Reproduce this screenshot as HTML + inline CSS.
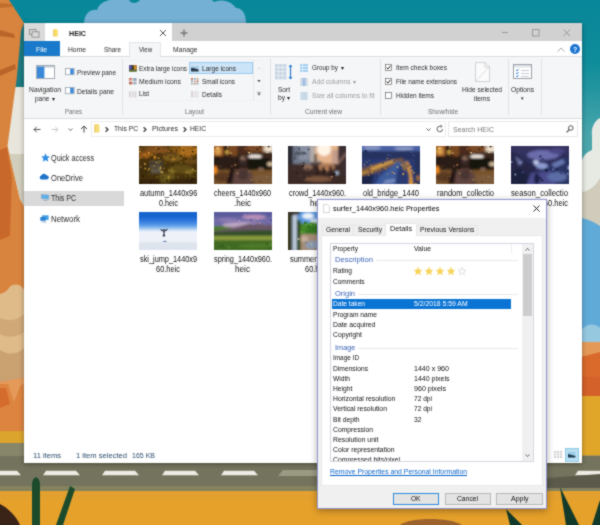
<!DOCTYPE html>
<html lang="en"><head><meta charset="utf-8"><title>HEIC - File Explorer</title>
<style>
html,body{margin:0;padding:0}
body{width:600px;height:525px;overflow:hidden;position:relative;background:#0a8796;font-family:"Liberation Sans",sans-serif}
.b{position:absolute;box-sizing:border-box}
.t{position:absolute;white-space:nowrap;line-height:10px;height:10px;color:#2b2b2b;transform-origin:0 50%;font-family:"Liberation Sans",sans-serif}
svg{position:absolute;display:block;overflow:visible}
#root{position:absolute;left:0;top:0;width:600px;height:525px;overflow:hidden;filter:url(#soft)}
</style></head><body>
<svg width="0" height="0" style="left:0;top:0"><defs><filter id="soft" x="0" y="0" width="100%" height="100%" color-interpolation-filters="sRGB"><feConvolveMatrix order="3" kernelMatrix="1 2 1 2 12 2 1 2 1" divisor="24" edgeMode="duplicate" preserveAlpha="true"/></filter></defs></svg>
<div id="root">
<svg width="600" height="525" viewBox="0 0 600 525" style="left:0;top:0">
<defs>
<linearGradient id="sky" x1="0" y1="0" x2="0" y2="1"><stop offset="0" stop-color="#08879a"/><stop offset="0.12" stop-color="#0f8c9a"/><stop offset="0.26" stop-color="#4aa6ab"/></linearGradient>
</defs>
<rect x="0" y="0" width="600" height="525" fill="url(#sky)"/>
<path d="M84 24 C84 14 90 9 97 10 C99 4 104 1 110 0 L129 0 C131 4 137 4 140 0 L212 0 C213 2 215 2 217 1 C224 -1 232 2 236 8 C242 8 246 13 246 24 Z" fill="#73b0d4"/>
<path d="M0 0 L9 0 L24 23 L24 140 L19 140 L17 60 L24 28 L24 470 L0 470 Z" fill="#d9843e"/>
<rect x="0" y="0" width="24" height="470" fill="#d9843e"/>
<path d="M9 0 L30 0 L30 30 L24 23 Z" fill="#08879a"/>
<path d="M24 23 L21 31 L18 65 L16.5 80 L15.5 88 L24 88 Z" fill="#1d7b82"/>
<path d="M15.5 87 L24 87 L24 206 L20 199 L7.5 146 Z" fill="#e8e6dc"/>
<path d="M9.4 154 L24 154 L24 206 L20 199 Z" fill="#d2cebd"/>
<path d="M0 3 L12 4 L13 7 L0 8 Z" fill="#c26f2e"/>
<path d="M0 30 L14 34 L15 38 L0 36 Z" fill="#b9652a"/>
<path d="M0 70 L15 64 L16 69 L0 76 Z" fill="#b9652a"/>
<path d="M0 150 L7 147 L12 178 L10 236 L0 240 Z" fill="#c8692b"/>
<path d="M0 294 C4 293 7 291 9 288 C11 284 18 283 22 287 L24 290 L24 382 L0 382 Z" fill="#dfbb8a"/>
<path d="M0 318 C10 322 18 320 24 314 L24 332 C16 338 6 338 0 334 Z" fill="#d0a878"/>
<path d="M0 350 C10 356 18 354 24 348 L24 382 L0 382 Z" fill="#caa272"/>
<path d="M0 382 L24 378 L24 436 L0 436 Z" fill="#dc8440"/>
<path d="M0 384 L8 384 L14 402 L20 386 L24 384 L24 378 L0 382 Z" fill="#e59a5a"/>
<path d="M0 388 L6 388 L10 404 L0 408 Z" fill="#d46c2e"/>
<rect x="0" y="431" width="24" height="14" fill="#dba42c"/>
<path d="M600 118 C594 121 591 128 592 136 L592 150 C586 152 581 158 581 166 L581 232 L600 232 Z" fill="#e7e9e3"/>
<path d="M581 192 C588 192 596 186 600 178 L600 232 L581 232 Z" fill="#d0cbba"/>
<path d="M581 218 C588 219 594 222 600 226 L600 345 L581 345 Z" fill="#60aad8"/>
<path d="M581 330 C588 322 596 324 600 328 L600 348 L581 348 Z" fill="#96c8e0"/>
<rect x="581" y="342" width="19" height="16" fill="#e39a58"/>
<path d="M581 357 L600 352 L600 400 L581 400 Z" fill="#d96a2c"/>
<path d="M581 378 C588 374 594 380 600 376 L600 400 L581 400 Z" fill="#d4602a"/>
<rect x="581" y="396" width="19" height="60" fill="#e0a62a"/>
<rect x="0" y="443" width="600" height="49" fill="#74735d"/>
<rect x="0" y="443" width="600" height="13" fill="#87866a"/>
<rect x="0" y="486" width="600" height="6" fill="#85835f"/>
<rect x="581" y="440" width="19" height="15.5" fill="#e0a62a"/>
<path d="M-13 470.8 L17 470.8 L21 475.2 L-16 475.2 Z" fill="#ecebe4"/>
<path d="M46 470.8 L76 470.8 L80 475.2 L43 475.2 Z" fill="#ecebe4"/>
<path d="M105 470.8 L135 470.8 L139 475.2 L102 475.2 Z" fill="#ecebe4"/>
<path d="M165 470.8 L195 470.8 L199 475.2 L162 475.2 Z" fill="#ecebe4"/>
<path d="M224 470.8 L254 470.8 L258 475.2 L221 475.2 Z" fill="#ecebe4"/>
<path d="M578 470.8 L608 470.8 L612 475.2 L575 475.2 Z" fill="#ecebe4"/>
<path d="M283 470 L317 470 L317 476 L278 476 Z" fill="#9a9982"/>
<path d="M548 478 L600 474 L600 488 L540 488 Z" fill="#5c5b4b"/>
<rect x="0" y="491" width="600" height="34" fill="#e2a02e"/>
<rect x="0" y="500" width="600" height="25" fill="#e6a12a"/>
<path d="M32 525 L32 485 C32 475 40 475 40 485 L40 525 Z" fill="#1c4b2c"/>
<path d="M56 525 L70 486 L75 489 L63 525 Z" fill="#1c4b2c"/>
<path d="M0 504 C8 508 16 516 20 525 L0 525 Z" fill="#3a2418"/>
<path d="M560 487 L579 525 L566 525 Z" fill="#123a2a"/>
<path d="M506 509 L522 525 L510 525 Z" fill="#123a2a"/>
<path d="M600 500 L592 525 L600 525 Z" fill="#123a2a"/>
<path d="M400 525 C410 517 450 517 462 525 Z" fill="#9c622c"/>
</svg>
<div class="b" style="left:24px;top:23px;width:557.7px;height:439.7px;background:#ffffff;box-shadow:0 1px 5px rgba(0,0,0,.35);"></div>
<div class="b" style="left:24px;top:23px;width:557.7px;height:18px;background:#d1d1d1;"></div>
<div class="b" style="left:24px;top:23px;width:21px;height:18px;background:#dadada;"></div>
<svg style="left:28.5px;top:28.5px" width="11" height="9" viewBox="0 0 11 9"><rect x="0.5" y="0.5" width="6.5" height="5" fill="none" stroke="#8c8c8c" stroke-width=".9"/><rect x="3" y="2.8" width="7" height="5.4" fill="#dadada" stroke="#8c8c8c" stroke-width=".9"/></svg>
<div class="b" style="left:45px;top:23px;width:127px;height:18px;background:#ffffff;"></div>
<svg style="left:53.3px;top:29.3px" width="5" height="7.4" viewBox="0 0 5 7.4"><path d="M1 0 H3.4 L4.8 1.2 V7.4 H1 Z" fill="#f9dc6c"/><path d="M0.2 0.8 H1.4 V7.4 H0.2 Z" fill="#efc44a"/></svg>
<span class="t" style="left:69.0px;top:28.5px;font-size:7.5px;color:#222;font-weight:bold;transform:scaleX(0.949);">HEIC</span>
<svg style="left:158.7px;top:28.5px" width="8" height="8" viewBox="0 0 8 8"><path d="M1 1 L7 7 M7 1 L1 7" stroke="#555" stroke-width="1" fill="none"/></svg>
<svg style="left:179.5px;top:28.5px" width="8" height="8" viewBox="0 0 8 8"><path d="M4 0.5 V7.5 M0.5 4 H7.5" stroke="#555" stroke-width="1" fill="none"/></svg>
<svg style="left:502px;top:32px" width="7" height="2" viewBox="0 0 7 2"><path d="M0 0.5 H6" stroke="#9a9a9a" stroke-width="1"/></svg>
<svg style="left:532.3px;top:28.5px" width="8" height="8" viewBox="0 0 8 8"><rect x="0.5" y="0.5" width="6.5" height="6.5" fill="none" stroke="#9a9a9a" stroke-width="1"/></svg>
<svg style="left:562.5px;top:28.5px" width="8" height="8" viewBox="0 0 8 8"><path d="M0.5 0.5 L7 7 M7 0.5 L0.5 7" stroke="#9a9a9a" stroke-width="1" fill="none"/></svg>
<div class="b" style="left:24px;top:41px;width:557.7px;height:15px;background:#ffffff;"></div>
<div class="b" style="left:24px;top:41px;width:36px;height:15px;background:#1979ca;"></div>
<span class="t" style="left:36.0px;top:44.5px;font-size:7px;color:#ffffff;transform:scaleX(0.975);">File</span>
<span class="t" style="left:68.0px;top:44.5px;font-size:7px;transform:scaleX(0.964);">Home</span>
<span class="t" style="left:104.0px;top:44.5px;font-size:7px;transform:scaleX(0.910);">Share</span>
<div class="b" style="left:129px;top:42px;width:32px;height:15px;background:#f5f6f7;border:1px solid #e4e5e6;border-bottom:none;"></div>
<span class="t" style="left:139.0px;top:44.5px;font-size:7px;transform:scaleX(0.864);">View</span>
<span class="t" style="left:172.5px;top:44.5px;font-size:7px;transform:scaleX(0.969);">Manage</span>
<svg style="left:556.5px;top:46.5px" width="8" height="5" viewBox="0 0 8 5"><path d="M0.5 4.5 L4 1 L7.5 4.5" stroke="#a8a8a8" stroke-width="1" fill="none"/></svg>
<div class="b" style="left:569.7px;top:43.7px;width:10px;height:10px;background:#1a73d2;border-radius:50%;"></div>
<span class="t" style="left:573.0px;top:44.5px;font-size:7px;color:#fff;font-weight:bold;">?</span>
<div class="b" style="left:24px;top:56px;width:557.7px;height:62.6px;background:#f5f6f7;border-top:1px solid #dadbdc;border-bottom:1px solid #dadbdc;"></div>
<div class="b" style="left:130px;top:56px;width:30px;height:2px;background:#f5f6f7;"></div>
<div class="b" style="left:122px;top:59px;width:1px;height:56px;background:#e2e3e4;"></div>
<div class="b" style="left:269.5px;top:59px;width:1px;height:56px;background:#e2e3e4;"></div>
<div class="b" style="left:380px;top:59px;width:1px;height:56px;background:#e2e3e4;"></div>
<div class="b" style="left:507.5px;top:59px;width:1px;height:56px;background:#e2e3e4;"></div>
<div class="b" style="left:540.5px;top:59px;width:1px;height:56px;background:#e2e3e4;"></div>
<svg style="left:36px;top:64.5px" width="19" height="14" viewBox="0 0 19 14"><rect x="0.5" y="0.5" width="18" height="13" fill="#fff" stroke="#a4aab2"/><rect x="1" y="1" width="17" height="1.6" fill="#c4ccd6"/><rect x="1" y="1.6" width="7.4" height="11.4" fill="#3b8ad9"/></svg>
<span class="t" style="left:29.0px;top:84.6px;font-size:7px;transform:scaleX(0.968);">Navigation</span>
<span class="t" style="left:35.0px;top:93.6px;font-size:7px;transform:scaleX(0.931);">pane</span>
<span class="t" style="left:51.5px;top:93.8px;font-size:6px;color:#222;">▾</span>
<svg style="left:65px;top:68.3px" width="10" height="7.4" viewBox="0 0 10 7.4"><rect x="0.5" y="0.5" width="8.6" height="6.2" fill="#fff" stroke="#98a2ac" stroke-width=".8"/><rect x="5.2" y="0.9" width="3.5" height="5.4" fill="#3b8ad9"/></svg>
<span class="t" style="left:77.0px;top:67.6px;font-size:7px;transform:scaleX(0.920);">Preview pane</span>
<svg style="left:65px;top:87.3px" width="10" height="7.4" viewBox="0 0 10 7.4"><rect x="0.5" y="0.5" width="8.6" height="6.2" fill="#fff" stroke="#98a2ac" stroke-width=".8"/><rect x="5.2" y="0.9" width="3.5" height="5.4" fill="#3b8ad9"/></svg>
<span class="t" style="left:77.0px;top:86.6px;font-size:7px;transform:scaleX(0.951);">Details pane</span>
<span class="t" style="left:65.0px;top:106.9px;font-size:7px;color:#6d6d6d;transform:scaleX(0.857);">Panes</span>
<div class="b" style="left:126px;top:60px;width:137px;height:41px;border:1px solid #f0f1f2;border-left:none;"></div>
<div class="b" style="left:253px;top:60px;width:10px;height:41px;border-left:1px solid #e6e7e8;"></div>
<div class="b" style="left:189px;top:62px;width:64px;height:12px;background:#cce4f7;border:1px solid #99c9ef;"></div>
<svg style="left:129.3px;top:64.9px" width="7.6" height="6.6" viewBox="0 0 9 7.5"><rect x="0" y="0" width="9" height="7.5" fill="#3a3424"/><rect x="0" y="0" width="3.2" height="5.5" fill="#5c54a6"/><rect x="5.6" y="0" width="3.4" height="5.5" fill="#cc8c2a"/><rect x="0" y="5.5" width="9" height="2" fill="#5c7a34"/></svg>
<span class="t" style="left:139.0px;top:63.8px;font-size:7px;transform:scaleX(0.921);">Extra large icons</span>
<svg style="left:129.3px;top:77.9px" width="7.6" height="6.6" viewBox="0 0 9 7.5"><rect x="0" y="0" width="4" height="3.2" fill="#c86454"/><rect x="1" y="1.6" width="3" height="1.6" fill="#e8e0dc"/><rect x="5" y="0" width="4" height="3.2" fill="#8ca2ba"/><rect x="0" y="4.2" width="4" height="3.2" fill="#b86c5c"/><rect x="5" y="4.2" width="4" height="3.2" fill="#a4b0bc"/></svg>
<span class="t" style="left:139.0px;top:76.8px;font-size:7px;transform:scaleX(0.973);">Medium icons</span>
<svg style="left:129.3px;top:90.9px" width="7.6" height="6.6" viewBox="0 0 9 7.5"><rect x="0" y="0" width="2.2" height="7.5" fill="#d8d4d8"/><rect x="3.3" y="0" width="2.2" height="7.5" fill="#dcd6da"/><rect x="6.6" y="0" width="2.2" height="7.5" fill="#d8d4d8"/></svg>
<span class="t" style="left:139.0px;top:89.4px;font-size:7px;transform:scaleX(0.918);">List</span>
<svg style="left:191.3px;top:64.9px" width="7.6" height="6.6" viewBox="0 0 9 7.5"><rect x="0" y="0" width="9" height="7.5" fill="#a6cbe8"/><path d="M0 3 L4 3.6 L9 5.2 L9 7.5 L0 7.5 Z" fill="#2a3a4a"/><rect x="0" y="0" width="9" height="1.2" fill="#d4e6f4"/></svg>
<span class="t" style="left:202.0px;top:63.8px;font-size:7px;transform:scaleX(0.940);">Large icons</span>
<svg style="left:191.3px;top:77.9px" width="7.6" height="6.6" viewBox="0 0 9 7.5"><rect x="0" y="0" width="2.2" height="2" fill="#c06858"/><rect x="3.3" y="0" width="2.2" height="2" fill="#8ca4bc"/><rect x="6.6" y="0" width="2.2" height="2" fill="#b4a48c"/><rect x="0" y="2.8" width="2.2" height="2" fill="#8ca4bc"/><rect x="3.3" y="2.8" width="2.2" height="2" fill="#c8a89c"/><rect x="6.6" y="2.8" width="2.2" height="2" fill="#c06858"/><rect x="0" y="5.6" width="2.2" height="1.9" fill="#9cb0a4"/><rect x="3.3" y="5.6" width="2.2" height="1.9" fill="#b88478"/><rect x="6.6" y="5.6" width="2.2" height="1.9" fill="#8ca4bc"/></svg>
<span class="t" style="left:202.0px;top:76.8px;font-size:7px;transform:scaleX(0.922);">Small icons</span>
<svg style="left:191.3px;top:90.9px" width="7.6" height="6.6" viewBox="0 0 9 7.5"><rect x="0" y="0" width="2.6" height="7.5" fill="#dcd4d6"/><rect x="3.4" y="0" width="5.6" height="7.5" fill="#e4e4e8"/><path d="M3.4 2.5 H9 M3.4 5 H9" stroke="#f2f2f4" stroke-width=".6"/></svg>
<span class="t" style="left:202.0px;top:89.8px;font-size:7px;transform:scaleX(0.935);">Details</span>
<svg style="left:256.5px;top:66.5px" width="4" height="3" viewBox="0 0 4 3"><path d="M0.5 2.3 L2 0.7 L3.5 2.3" stroke="#c4c4c4" stroke-width=".7" fill="none"/></svg>
<svg style="left:256.5px;top:80.3px" width="4" height="3" viewBox="0 0 4 3"><path d="M0.2 0 H3.8 L2 2.2 Z" fill="#555"/></svg>
<svg style="left:256.5px;top:92.3px" width="4" height="4" viewBox="0 0 4 4"><path d="M0.2 0.3 H3.8" stroke="#555" stroke-width=".6"/><path d="M0.2 1.4 H3.8 L2 3.6 Z" fill="#555"/></svg>
<span class="t" style="left:185.0px;top:106.9px;font-size:7px;color:#6d6d6d;transform:scaleX(0.904);">Layout</span>
<svg style="left:275px;top:64px" width="18" height="16" viewBox="0 0 18 16"><rect x="0" y="0" width="3.4" height="3.4" fill="#c8d6e4"/><rect x="0" y="4" width="3.4" height="3.4" fill="#c8d6e4"/><rect x="0" y="8" width="3.4" height="3.4" fill="#c8d6e4"/><rect x="0" y="12" width="3.4" height="3.4" fill="#c8d6e4"/><rect x="4" y="0" width="3.4" height="3.4" fill="#c8d6e4"/><rect x="4" y="4" width="3.4" height="3.4" fill="#c8d6e4"/><rect x="4" y="8" width="3.4" height="3.4" fill="#c8d6e4"/><rect x="4" y="12" width="3.4" height="3.4" fill="#c8d6e4"/><rect x="8" y="0" width="3.4" height="3.4" fill="#c8d6e4"/><rect x="8" y="4" width="3.4" height="3.4" fill="#c8d6e4"/><rect x="8" y="8" width="3.4" height="3.4" fill="#c8d6e4"/><rect x="8" y="12" width="3.4" height="3.4" fill="#c8d6e4"/><path d="M15.5 1 V15" stroke="#2a7ad0" stroke-width="1.2"/><path d="M13.5 3 L15.5 0.5 L17.5 3 Z M13.5 13 L15.5 15.5 L17.5 13 Z" fill="#2a7ad0"/></svg>
<span class="t" style="left:278.0px;top:84.6px;font-size:7px;transform:scaleX(0.935);">Sort</span>
<span class="t" style="left:278.0px;top:93.0px;font-size:7px;transform:scaleX(0.947);">by</span>
<span class="t" style="left:286.5px;top:93.2px;font-size:6px;color:#222;">▾</span>
<svg style="left:300px;top:63.5px" width="8" height="8" viewBox="0 0 8 8"><rect x="0" y="0" width="8" height="8" fill="#a8d0f0"/><path d="M0 2.5 H8 M0 5.5 H8 M2.5 0 V8" stroke="#e8f2fa" stroke-width=".7"/></svg>
<span class="t" style="left:312.0px;top:62.9px;font-size:7px;transform:scaleX(0.903);">Group by</span>
<span class="t" style="left:340.5px;top:63.0px;font-size:6px;color:#222;">▾</span>
<svg style="left:300px;top:77.5px" width="8" height="8" viewBox="0 0 8 8"><rect x="0" y="0" width="8" height="8" fill="#d4dde6"/><rect x="2.5" y="0" width="3" height="8" fill="#9ebfe0"/></svg>
<span class="t" style="left:312.0px;top:76.8px;font-size:7px;color:#9a9a9a;transform:scaleX(0.951);">Add columns</span>
<span class="t" style="left:352.5px;top:76.9px;font-size:6px;color:#9a9a9a;">▾</span>
<svg style="left:300px;top:91.5px" width="8" height="8" viewBox="0 0 8 8"><rect x="0" y="0" width="8" height="8" fill="#d8e2ec"/><path d="M2.7 0 V8 M5.4 0 V8" stroke="#a8c4e0" stroke-width=".8"/></svg>
<span class="t" style="left:312.0px;top:90.8px;font-size:7px;color:#9a9a9a;transform:scaleX(0.951);">Size all columns to fit</span>
<span class="t" style="left:305.0px;top:106.9px;font-size:7px;color:#6d6d6d;transform:scaleX(0.942);">Current view</span>
<svg style="left:385px;top:63.8px" width="7" height="7" viewBox="0 0 7 7"><rect x="0.5" y="0.5" width="6" height="6" fill="#fff" stroke="#6a6a6a" stroke-width=".7"/><path d="M1.6 3.6 L3 5 L5.5 1.8" stroke="#222" stroke-width="1" fill="none"/></svg>
<span class="t" style="left:396.0px;top:62.6px;font-size:7px;transform:scaleX(0.936);">Item check boxes</span>
<svg style="left:385px;top:78.1px" width="7" height="7" viewBox="0 0 7 7"><rect x="0.5" y="0.5" width="6" height="6" fill="#fff" stroke="#6a6a6a" stroke-width=".7"/><path d="M1.6 3.6 L3 5 L5.5 1.8" stroke="#222" stroke-width="1" fill="none"/></svg>
<span class="t" style="left:396.0px;top:76.9px;font-size:7px;transform:scaleX(0.922);">File name extensions</span>
<svg style="left:385px;top:92.4px" width="7" height="7" viewBox="0 0 7 7"><rect x="0.5" y="0.5" width="6" height="6" fill="#fff" stroke="#6a6a6a" stroke-width=".7"/></svg>
<span class="t" style="left:396.0px;top:91.1px;font-size:7px;transform:scaleX(0.930);">Hidden items</span>
<svg style="left:475px;top:62px" width="15" height="20" viewBox="0 0 15 20"><path d="M0.5 0.5 H10 L14.5 5 V19.5 H0.5 Z" fill="#fbfbfb" stroke="#c4c8cc" stroke-width=".8"/><path d="M10 0.5 V5 H14.5" fill="none" stroke="#c4c8cc" stroke-width=".8"/><path d="M1 19 L14 5" stroke="#d4d8dc" stroke-width=".8"/></svg>
<span class="t" style="left:462.0px;top:84.6px;font-size:7px;transform:scaleX(0.943);">Hide selected</span>
<span class="t" style="left:474.0px;top:94.0px;font-size:7px;transform:scaleX(0.957);">items</span>
<span class="t" style="left:428.0px;top:106.5px;font-size:7px;color:#6d6d6d;transform:scaleX(0.918);">Show/hide</span>
<svg style="left:513px;top:64px" width="19" height="15" viewBox="0 0 19 15"><rect x="0.5" y="0.5" width="18" height="14" fill="#fff" stroke="#9aa0a8"/><rect x="1" y="1" width="17" height="2.5" fill="#dfe3e8"/><path d="M3 6 l1 1 l1.6 -2 M3 9 l1 1 l1.6 -2 M3 12 l1 1 l1.6 -2" stroke="#2a7ad0" stroke-width=".9" fill="none"/><path d="M8 6.5 H16 M8 9.5 H16 M8 12.5 H16" stroke="#b8bec6" stroke-width=".8"/></svg>
<span class="t" style="left:511.0px;top:84.6px;font-size:7px;transform:scaleX(0.953);">Options</span>
<span class="t" style="left:520.8px;top:93.0px;font-size:5px;color:#222;">▾</span>
<svg style="left:33px;top:125.5px" width="8" height="7" viewBox="0 0 8 7"><path d="M7.5 3.5 H1 M3.8 0.7 L1 3.5 L3.8 6.3" stroke="#555" stroke-width="1" fill="none"/></svg>
<svg style="left:51px;top:125.5px" width="8" height="7" viewBox="0 0 8 7"><path d="M0.5 3.5 H7 M4.2 0.7 L7 3.5 L4.2 6.3" stroke="#c8c8c8" stroke-width="1" fill="none"/></svg>
<svg style="left:68px;top:127.5px" width="5" height="3" viewBox="0 0 5 3"><path d="M0.5 0.5 L2.5 2.5 L4.5 0.5" stroke="#555" stroke-width=".9" fill="none"/></svg>
<svg style="left:80px;top:125px" width="8" height="8" viewBox="0 0 8 8"><path d="M4 7.5 V1 M1 4 L4 1 L7 4" stroke="#444" stroke-width="1" fill="none"/></svg>
<div class="b" style="left:91px;top:121px;width:355px;height:16px;background:#fff;border:1px solid #ececec;"></div>
<svg style="left:94px;top:124px" width="6" height="9" viewBox="0 0 6 9"><path d="M1 0 H4 L5.5 1.2 V8.5 H1 Z" fill="#f8dc7c"/><path d="M0.3 0.8 H1.6 V8.5 H0.3 Z" fill="#ecc458"/></svg>
<svg style="left:105px;top:126.5px" width="4" height="5" viewBox="0 0 4 5"><path d="M0.6 0.3 L3 2.5 L0.6 4.7" stroke="#333" stroke-width="1.2" fill="none"/></svg>
<span class="t" style="left:114.0px;top:124.3px;font-size:7.5px;transform:scaleX(0.900);">This PC</span>
<svg style="left:143px;top:126.5px" width="4" height="5" viewBox="0 0 4 5"><path d="M0.6 0.3 L3 2.5 L0.6 4.7" stroke="#333" stroke-width="1.2" fill="none"/></svg>
<span class="t" style="left:152.0px;top:124.3px;font-size:7.5px;transform:scaleX(0.960);">Pictures</span>
<svg style="left:183px;top:126.5px" width="4" height="5" viewBox="0 0 4 5"><path d="M0.6 0.3 L3 2.5 L0.6 4.7" stroke="#333" stroke-width="1.2" fill="none"/></svg>
<span class="t" style="left:190.0px;top:124.3px;font-size:7.5px;transform:scaleX(0.893);">HEIC</span>
<svg style="left:426px;top:127.5px" width="5" height="3" viewBox="0 0 5 3"><path d="M0.5 0.5 L2.5 2.5 L4.5 0.5" stroke="#444" stroke-width=".9" fill="none"/></svg>
<svg style="left:435.5px;top:125px" width="8" height="8" viewBox="0 0 8 8"><path d="M6.6 4 A2.8 2.8 0 1 1 4 1.2 H5.6" stroke="#555" stroke-width=".9" fill="none"/><path d="M4.6 0 L6.2 1.2 L4.6 2.6" stroke="#555" stroke-width=".8" fill="none"/></svg>
<div class="b" style="left:448px;top:121px;width:130px;height:16px;background:#fff;border:1px solid #e8e8e8;"></div>
<span class="t" style="left:453.0px;top:124.5px;font-size:7.5px;color:#7a7a7a;transform:scaleX(0.937);">Search HEIC</span>
<svg style="left:566px;top:125px" width="8" height="8" viewBox="0 0 8 8"><circle cx="4.8" cy="3" r="2.3" stroke="#444" stroke-width=".9" fill="none"/><path d="M3.2 4.7 L0.6 7.4" stroke="#444" stroke-width="1.1"/></svg>
<div class="b" style="left:24px;top:190.5px;width:99.5px;height:15px;background:#d9d9d9;"></div>
<svg style="left:40.8px;top:153px" width="8.5" height="8.5" viewBox="0 0 8.5 8.5"><path d="M4.5 0.3 L5.8 3.2 L8.9 3.5 L6.6 5.6 L7.3 8.7 L4.5 7.1 L1.7 8.7 L2.4 5.6 L0.1 3.5 L3.2 3.2 Z" fill="#2f8de4"/></svg>
<span class="t" style="left:51.0px;top:153.1px;font-size:8.5px;transform:scaleX(0.851);">Quick access</span>
<svg style="left:39.2px;top:173.4px" width="10" height="7" viewBox="0 0 10 7"><path d="M2.2 6.5 A2 2 0 0 1 2.4 2.6 A2.6 2.6 0 0 1 7.2 2.2 A2.1 2.1 0 0 1 8 6.5 Z" fill="#1f73c8"/></svg>
<span class="t" style="left:51.0px;top:172.9px;font-size:8.5px;transform:scaleX(0.891);">OneDrive</span>
<svg style="left:41px;top:194.3px" width="9" height="7" viewBox="0 0 9 7"><path d="M0.4 0.4 L7.8 1 L7.8 5.2 L0.4 4.6 Z" fill="#5cb0ec" stroke="#8a9eb4" stroke-width=".5"/><path d="M2.4 6.3 H6.6" stroke="#8a9eb4" stroke-width=".8"/></svg>
<span class="t" style="left:51.0px;top:193.2px;font-size:8.5px;transform:scaleX(0.827);">This PC</span>
<svg style="left:40.3px;top:215.2px" width="9" height="8" viewBox="0 0 9 8"><rect x="2" y="0.3" width="6.6" height="4.6" fill="#46a0e6"/><rect x="0.3" y="2" width="5.4" height="3.8" fill="#2c82d4"/><path d="M1.6 7 H6.6" stroke="#7a9ec0" stroke-width=".8"/></svg>
<span class="t" style="left:51.0px;top:213.9px;font-size:8.5px;transform:scaleX(0.930);">Network</span>
<svg width="0" height="0" style="left:0;top:0"><defs><filter id="bl" x="-10%" y="-10%" width="120%" height="120%"><feGaussianBlur stdDeviation="0.8"/></filter><filter id="bl2" x="-10%" y="-10%" width="120%" height="120%"><feGaussianBlur stdDeviation="0.35"/></filter></defs></svg>
<svg style="left:139px;top:146px" width="58" height="38" viewBox="0 0 58 38"><defs><clipPath id="c139146"><rect width="58" height="38"/></clipPath></defs><g clip-path="url(#c139146)"><g filter="url(#bl)"><rect x="-6" y="-6" width="70" height="50" fill="#46300f"/><rect x="-6" y="-6" width="70" height="16" fill="#5a3c12"/><ellipse cx="49" cy="5" rx="11" ry="6" fill="#a86c1c"/><ellipse cx="37" cy="3" rx="6" ry="3" fill="#8a5a16"/><ellipse cx="18" cy="4" rx="12" ry="4" fill="#80501a"/><ellipse cx="6" cy="9" rx="6" ry="3" fill="#9a5a1c"/><ellipse cx="34" cy="12" rx="10" ry="3.5" fill="#7a5a1a"/><ellipse cx="52" cy="15" rx="7" ry="3" fill="#6a4a14"/><rect x="11" y="15" width="12" height="12" fill="#605848"/><rect x="10" y="16.5" width="14" height="2.2" fill="#33281a"/><rect x="12" y="21" width="10" height="1.2" fill="#40382a"/><ellipse cx="42" cy="23" rx="12" ry="4.5" fill="#5e4c18"/><ellipse cx="33" cy="25" rx="3" ry="2" fill="#8a7228"/><ellipse cx="50" cy="26" rx="4" ry="2" fill="#806a24"/><ellipse cx="28" cy="31" rx="8" ry="3.5" fill="#6a581c"/><rect x="-6" y="33" width="70" height="12" fill="#37270d"/><ellipse cx="6" cy="25" rx="6" ry="6" fill="#3f2d10"/><ellipse cx="26" cy="35" rx="5" ry="1.5" fill="#6a5a1c"/></g><g filter="url(#bl2)"><ellipse cx="7.8" cy="11.9" rx="0.9" ry="0.6" fill="#7a4a12"/><ellipse cx="44.1" cy="6.6" rx="0.7" ry="0.4" fill="#d89428"/><ellipse cx="1.6" cy="11.7" rx="0.7" ry="0.7" fill="#c8841e"/><ellipse cx="15.4" cy="11.2" rx="0.8" ry="0.9" fill="#c8841e"/><ellipse cx="1.8" cy="0.4" rx="0.8" ry="0.7" fill="#3a2808"/><ellipse cx="56.2" cy="10.2" rx="0.8" ry="0.8" fill="#3a2808"/><ellipse cx="32.1" cy="4.8" rx="0.9" ry="0.9" fill="#3a2808"/><ellipse cx="53.7" cy="5.8" rx="1.0" ry="0.7" fill="#2e1e08"/><ellipse cx="36.5" cy="10.1" rx="0.6" ry="0.5" fill="#2e1e08"/><ellipse cx="41.8" cy="10.0" rx="1.1" ry="0.9" fill="#3a2808"/><ellipse cx="52.8" cy="2.7" rx="0.6" ry="0.6" fill="#3a2808"/><ellipse cx="29.3" cy="8.2" rx="0.4" ry="0.4" fill="#d89428"/><ellipse cx="23.4" cy="9.3" rx="0.7" ry="0.6" fill="#2e1e08"/><ellipse cx="42.8" cy="1.2" rx="0.9" ry="0.9" fill="#c8841e"/><ellipse cx="30.2" cy="5.5" rx="0.7" ry="0.6" fill="#c8841e"/><ellipse cx="17.9" cy="11.9" rx="0.8" ry="0.7" fill="#a86a1a"/><ellipse cx="9.9" cy="7.0" rx="1.1" ry="0.9" fill="#d89428"/><ellipse cx="49.9" cy="3.3" rx="0.8" ry="0.6" fill="#a86a1a"/><ellipse cx="52.8" cy="9.2" rx="0.8" ry="0.5" fill="#2e1e08"/><ellipse cx="45.5" cy="11.5" rx="1.0" ry="0.9" fill="#2e1e08"/><ellipse cx="7.5" cy="10.9" rx="0.5" ry="0.5" fill="#c8841e"/><ellipse cx="21.2" cy="7.8" rx="1.1" ry="0.9" fill="#3a2808"/><ellipse cx="20.7" cy="4.8" rx="0.8" ry="0.8" fill="#a86a1a"/><ellipse cx="19.2" cy="8.4" rx="1.0" ry="0.7" fill="#2e1e08"/><ellipse cx="33.9" cy="12.1" rx="1.0" ry="0.6" fill="#7a4a12"/><ellipse cx="54.7" cy="1.0" rx="1.0" ry="0.6" fill="#3a2808"/><ellipse cx="43.8" cy="3.5" rx="0.5" ry="0.3" fill="#a86a1a"/><ellipse cx="16.8" cy="2.3" rx="0.6" ry="0.5" fill="#d89428"/><ellipse cx="37.6" cy="4.1" rx="0.9" ry="0.7" fill="#3a2808"/><ellipse cx="1.4" cy="5.4" rx="0.7" ry="0.5" fill="#d89428"/><ellipse cx="14.7" cy="10.2" rx="1.1" ry="0.9" fill="#a86a1a"/><ellipse cx="56.6" cy="3.2" rx="0.7" ry="0.7" fill="#c8841e"/><ellipse cx="9.3" cy="9.9" rx="0.9" ry="0.9" fill="#a86a1a"/><ellipse cx="56.7" cy="8.8" rx="0.9" ry="0.6" fill="#3a2808"/><ellipse cx="37.6" cy="5.5" rx="0.8" ry="0.7" fill="#7a4a12"/><ellipse cx="24.7" cy="10.3" rx="0.5" ry="0.5" fill="#d89428"/><ellipse cx="17.8" cy="12.0" rx="0.6" ry="0.6" fill="#7a4a12"/><ellipse cx="24.1" cy="3.5" rx="0.4" ry="0.4" fill="#c8841e"/><ellipse cx="12.6" cy="12.6" rx="0.7" ry="0.7" fill="#2e1e08"/><ellipse cx="2.2" cy="2.8" rx="0.5" ry="0.4" fill="#a86a1a"/><ellipse cx="25.1" cy="2.7" rx="0.5" ry="0.4" fill="#2e1e08"/><ellipse cx="29.2" cy="0.2" rx="0.8" ry="0.9" fill="#3a2808"/><ellipse cx="1.0" cy="2.8" rx="0.6" ry="0.6" fill="#a86a1a"/><ellipse cx="19.7" cy="3.0" rx="0.9" ry="0.9" fill="#3a2808"/><ellipse cx="19.9" cy="12.4" rx="0.9" ry="0.9" fill="#3a2808"/><ellipse cx="30.9" cy="0.9" rx="0.4" ry="0.3" fill="#d89428"/><ellipse cx="52.8" cy="3.0" rx="0.9" ry="0.8" fill="#a86a1a"/><ellipse cx="14.8" cy="4.7" rx="0.5" ry="0.5" fill="#d89428"/><ellipse cx="35.0" cy="13.4" rx="1.0" ry="0.9" fill="#d89428"/><ellipse cx="44.7" cy="4.5" rx="0.7" ry="0.7" fill="#3a2808"/><ellipse cx="45.7" cy="11.6" rx="0.6" ry="0.6" fill="#a86a1a"/><ellipse cx="53.7" cy="1.1" rx="0.8" ry="0.5" fill="#a86a1a"/><ellipse cx="15.5" cy="12.5" rx="0.8" ry="0.7" fill="#c8841e"/><ellipse cx="16.1" cy="11.0" rx="1.0" ry="0.9" fill="#c8841e"/><ellipse cx="0.8" cy="5.8" rx="1.0" ry="0.7" fill="#c8841e"/><ellipse cx="45.6" cy="8.2" rx="0.5" ry="0.4" fill="#3a2808"/><ellipse cx="14.0" cy="10.4" rx="0.5" ry="0.5" fill="#3a2808"/><ellipse cx="31.5" cy="11.5" rx="0.8" ry="0.7" fill="#2e1e08"/><ellipse cx="5.8" cy="9.1" rx="0.4" ry="0.4" fill="#c8841e"/><ellipse cx="53.7" cy="10.2" rx="0.6" ry="0.5" fill="#3a2808"/><ellipse cx="3.7" cy="12.8" rx="1.1" ry="0.7" fill="#3a2808"/><ellipse cx="12.5" cy="8.6" rx="1.1" ry="1.1" fill="#a86a1a"/><ellipse cx="27.2" cy="5.0" rx="0.5" ry="0.4" fill="#d89428"/><ellipse cx="14.3" cy="1.1" rx="0.6" ry="0.4" fill="#3a2808"/><ellipse cx="33.3" cy="4.7" rx="0.6" ry="0.3" fill="#7a4a12"/><ellipse cx="10.8" cy="11.1" rx="0.8" ry="0.6" fill="#7a4a12"/><ellipse cx="5.9" cy="8.6" rx="1.0" ry="0.7" fill="#c8841e"/><ellipse cx="1.2" cy="3.4" rx="0.5" ry="0.5" fill="#a86a1a"/><ellipse cx="42.3" cy="0.3" rx="0.4" ry="0.3" fill="#7a4a12"/><ellipse cx="50.0" cy="2.2" rx="0.8" ry="0.5" fill="#7a4a12"/><ellipse cx="55.4" cy="31.0" rx="0.4" ry="0.3" fill="#9a7c28"/><ellipse cx="9.8" cy="28.2" rx="1.0" ry="0.9" fill="#5a4a14"/><ellipse cx="35.2" cy="23.6" rx="0.5" ry="0.5" fill="#2e220a"/><ellipse cx="46.6" cy="29.2" rx="0.8" ry="0.7" fill="#5a4a14"/><ellipse cx="25.8" cy="17.4" rx="0.4" ry="0.3" fill="#9a7c28"/><ellipse cx="54.0" cy="30.2" rx="0.7" ry="0.5" fill="#7a6420"/><ellipse cx="10.3" cy="16.6" rx="0.5" ry="0.4" fill="#a88a30"/><ellipse cx="29.6" cy="32.0" rx="0.9" ry="1.0" fill="#a88a30"/><ellipse cx="25.8" cy="20.3" rx="0.8" ry="0.6" fill="#3a2a0c"/><ellipse cx="34.4" cy="19.2" rx="1.0" ry="0.7" fill="#2e220a"/><ellipse cx="43.7" cy="26.3" rx="0.7" ry="0.5" fill="#7a6420"/><ellipse cx="16.2" cy="22.0" rx="0.8" ry="0.6" fill="#3a2a0c"/><ellipse cx="51.2" cy="30.0" rx="0.7" ry="0.7" fill="#7a6420"/><ellipse cx="32.3" cy="21.1" rx="0.9" ry="0.9" fill="#5a4a14"/><ellipse cx="48.4" cy="29.5" rx="0.8" ry="0.9" fill="#3a2a0c"/><ellipse cx="18.0" cy="31.1" rx="0.9" ry="0.8" fill="#7a6420"/><ellipse cx="29.4" cy="24.3" rx="0.7" ry="0.5" fill="#b89a40"/><ellipse cx="29.7" cy="30.7" rx="0.8" ry="0.8" fill="#9a7c28"/><ellipse cx="19.8" cy="12.2" rx="1.0" ry="0.6" fill="#b89a40"/><ellipse cx="33.3" cy="13.0" rx="0.8" ry="0.8" fill="#b89a40"/><ellipse cx="6.2" cy="22.4" rx="1.0" ry="1.0" fill="#a88a30"/><ellipse cx="54.7" cy="13.2" rx="1.0" ry="0.6" fill="#3a2a0c"/><ellipse cx="21.0" cy="15.4" rx="0.9" ry="0.6" fill="#9a7c28"/><ellipse cx="3.9" cy="12.8" rx="1.0" ry="0.8" fill="#5a4a14"/><ellipse cx="47.2" cy="15.1" rx="0.5" ry="0.3" fill="#b89a40"/><ellipse cx="34.2" cy="27.9" rx="0.6" ry="0.3" fill="#9a7c28"/><ellipse cx="54.4" cy="24.6" rx="0.9" ry="0.7" fill="#5a4a14"/><ellipse cx="1.8" cy="21.0" rx="0.9" ry="0.6" fill="#b89a40"/><ellipse cx="15.3" cy="20.0" rx="0.8" ry="0.7" fill="#a88a30"/><ellipse cx="13.1" cy="25.2" rx="0.6" ry="0.4" fill="#9a7c28"/><ellipse cx="45.7" cy="31.0" rx="0.8" ry="0.6" fill="#3a2a0c"/><ellipse cx="29.9" cy="14.9" rx="1.1" ry="0.8" fill="#5a4a14"/><ellipse cx="56.3" cy="25.1" rx="0.9" ry="0.8" fill="#a88a30"/><ellipse cx="14.7" cy="14.6" rx="0.5" ry="0.5" fill="#2e220a"/><ellipse cx="29.5" cy="31.7" rx="1.1" ry="0.8" fill="#a88a30"/><ellipse cx="25.8" cy="17.0" rx="0.8" ry="0.8" fill="#7a6420"/><ellipse cx="36.2" cy="19.2" rx="0.9" ry="0.8" fill="#5a4a14"/><ellipse cx="0.3" cy="12.7" rx="0.7" ry="0.6" fill="#9a7c28"/><ellipse cx="5.1" cy="14.0" rx="0.4" ry="0.3" fill="#3a2a0c"/><ellipse cx="12.6" cy="22.4" rx="0.7" ry="0.6" fill="#5a4a14"/><ellipse cx="22.0" cy="25.7" rx="0.9" ry="0.9" fill="#a88a30"/><ellipse cx="25.2" cy="22.2" rx="0.8" ry="0.8" fill="#9a7c28"/><ellipse cx="53.9" cy="23.6" rx="1.0" ry="1.0" fill="#b89a40"/><ellipse cx="21.2" cy="22.4" rx="1.0" ry="0.8" fill="#7a6420"/><ellipse cx="40.0" cy="30.6" rx="0.6" ry="0.6" fill="#3a2a0c"/><ellipse cx="5.9" cy="18.1" rx="1.0" ry="1.0" fill="#b89a40"/><ellipse cx="47.1" cy="13.2" rx="0.8" ry="0.6" fill="#2e220a"/><ellipse cx="34.1" cy="13.5" rx="0.6" ry="0.5" fill="#5a4a14"/><ellipse cx="42.0" cy="16.4" rx="0.7" ry="0.7" fill="#9a7c28"/><ellipse cx="22.7" cy="21.3" rx="0.9" ry="1.0" fill="#2e220a"/><ellipse cx="14.7" cy="14.5" rx="0.8" ry="0.8" fill="#5a4a14"/><ellipse cx="55.7" cy="25.9" rx="0.4" ry="0.3" fill="#b89a40"/><ellipse cx="2.5" cy="26.1" rx="0.6" ry="0.4" fill="#2e220a"/><ellipse cx="21.7" cy="21.7" rx="1.0" ry="1.1" fill="#b89a40"/><ellipse cx="46.7" cy="30.6" rx="1.0" ry="0.8" fill="#5a4a14"/><ellipse cx="9.1" cy="23.9" rx="0.8" ry="0.7" fill="#b89a40"/><ellipse cx="53.3" cy="23.7" rx="1.0" ry="0.6" fill="#9a7c28"/><ellipse cx="10.2" cy="22.9" rx="1.0" ry="1.0" fill="#9a7c28"/><ellipse cx="52.9" cy="25.6" rx="1.0" ry="0.6" fill="#9a7c28"/><ellipse cx="17.2" cy="16.6" rx="0.9" ry="0.7" fill="#b89a40"/><ellipse cx="10.0" cy="17.7" rx="0.5" ry="0.4" fill="#3a2a0c"/><ellipse cx="19.1" cy="17.0" rx="0.8" ry="0.8" fill="#a88a30"/><ellipse cx="26.7" cy="26.1" rx="0.7" ry="0.7" fill="#5a4a14"/><ellipse cx="33.3" cy="14.9" rx="0.7" ry="0.7" fill="#9a7c28"/><ellipse cx="22.2" cy="26.7" rx="0.7" ry="0.6" fill="#9a7c28"/><ellipse cx="23.5" cy="26.2" rx="1.1" ry="1.0" fill="#b89a40"/><ellipse cx="20.9" cy="23.0" rx="0.9" ry="0.6" fill="#b89a40"/><ellipse cx="47.5" cy="26.5" rx="0.8" ry="0.6" fill="#a88a30"/><ellipse cx="38.7" cy="31.5" rx="0.8" ry="0.6" fill="#9a7c28"/><ellipse cx="30.4" cy="30.1" rx="0.7" ry="0.7" fill="#a88a30"/><ellipse cx="13.8" cy="34.4" rx="0.8" ry="0.8" fill="#2a1c08"/><ellipse cx="3.8" cy="30.1" rx="1.3" ry="1.1" fill="#2a1c08"/><ellipse cx="11.1" cy="35.7" rx="1.0" ry="0.8" fill="#2a1c08"/><ellipse cx="49.9" cy="31.9" rx="0.6" ry="0.6" fill="#2a1c08"/><ellipse cx="38.9" cy="30.5" rx="1.2" ry="0.9" fill="#5a4a16"/><ellipse cx="1.8" cy="36.9" rx="0.9" ry="0.9" fill="#2a1c08"/><ellipse cx="53.4" cy="33.2" rx="1.2" ry="1.3" fill="#2a1c08"/><ellipse cx="7.8" cy="32.9" rx="0.5" ry="0.4" fill="#2a1c08"/><ellipse cx="56.0" cy="33.5" rx="1.1" ry="0.9" fill="#2a1c08"/><ellipse cx="48.3" cy="34.6" rx="1.0" ry="0.9" fill="#2a1c08"/><ellipse cx="52.4" cy="35.5" rx="1.3" ry="1.5" fill="#2a1c08"/><ellipse cx="38.9" cy="31.3" rx="1.3" ry="1.2" fill="#5a4a16"/><ellipse cx="12.2" cy="36.7" rx="1.0" ry="0.7" fill="#2a1c08"/><ellipse cx="28.0" cy="35.1" rx="0.9" ry="0.9" fill="#2a1c08"/><ellipse cx="23.8" cy="31.2" rx="0.8" ry="0.8" fill="#2a1c08"/><ellipse cx="2.6" cy="34.9" rx="0.5" ry="0.5" fill="#2a1c08"/></g></g></svg>
<svg style="left:213.5px;top:146px" width="58" height="38" viewBox="0 0 58 38"><defs><clipPath id="c213146"><rect width="58" height="38"/></clipPath></defs><g clip-path="url(#c213146)"><g filter="url(#bl)"><rect x="-6" y="-6" width="70" height="50" fill="#3a251b"/><rect x="-6" y="-6" width="18" height="26" fill="#a4622a"/><ellipse cx="4" cy="5" rx="3" ry="4" fill="#d8a050"/><rect x="9" y="-6" width="6" height="18" fill="#3a2418"/><rect x="15" y="-6" width="8" height="16" fill="#7a4a20"/><ellipse cx="13" cy="6" rx="2" ry="2.5" fill="#c8a040"/><rect x="23" y="-6" width="10" height="14" fill="#4a2c1c"/><rect x="33" y="-6" width="16" height="12" fill="#7a4a28"/><rect x="49" y="-6" width="15" height="12" fill="#b8a088"/><ellipse cx="55" cy="3" rx="5" ry="3" fill="#f0e4d0"/><rect x="-6" y="10" width="40" height="12" fill="#2a1c18"/><ellipse cx="41" cy="10.5" rx="7" ry="2" fill="#f4ece4"/><rect x="34" y="12" width="22" height="13" rx="4" fill="#181210"/><ellipse cx="56" cy="18" rx="3" ry="2" fill="#d8c0a0"/><ellipse cx="47" cy="24" rx="3" ry="2.4" fill="#8a6a5a"/><rect x="-6" y="24" width="70" height="20" fill="#78522a"/><ellipse cx="50" cy="33" rx="12" ry="5" fill="#7a5a3a"/><ellipse cx="1" cy="24" rx="2.4" ry="4" fill="#f08a24"/><ellipse cx="8" cy="31" rx="8" ry="5" fill="#5a3a20"/><path d="M12 38 L16 24 L20 20 L22 38 Z" fill="#241814"/><ellipse cx="29" cy="15" rx="3.6" ry="4.2" fill="#3a2c2c"/><ellipse cx="29" cy="12" rx="3" ry="2" fill="#8a6a5a"/><path d="M17 44 L20 27 C22 21 36 21 38 27 L41 44 Z" fill="#5e443c"/><ellipse cx="29" cy="29" rx="5" ry="5" fill="#4a3430"/></g><g filter="url(#bl2)"><ellipse cx="13.7" cy="1.0" rx="0.9" ry="0.6" fill="#f8d8a0"/><ellipse cx="1.1" cy="5.5" rx="0.8" ry="0.5" fill="#e8a040"/><ellipse cx="31.1" cy="2.8" rx="0.7" ry="0.5" fill="#e8a040"/><ellipse cx="54.7" cy="0.3" rx="1.1" ry="1.1" fill="#2a1810"/><ellipse cx="11.2" cy="3.1" rx="1.1" ry="0.7" fill="#2a1810"/><ellipse cx="35.1" cy="6.7" rx="1.0" ry="0.7" fill="#f8d8a0"/><ellipse cx="16.2" cy="9.4" rx="1.2" ry="0.7" fill="#2a1810"/><ellipse cx="16.9" cy="7.0" rx="0.8" ry="0.6" fill="#f8d8a0"/><ellipse cx="34.7" cy="4.3" rx="0.6" ry="0.5" fill="#2a1810"/><ellipse cx="46.2" cy="0.8" rx="0.9" ry="0.8" fill="#2a1810"/><ellipse cx="37.6" cy="7.0" rx="0.6" ry="0.4" fill="#f8d8a0"/><ellipse cx="53.0" cy="6.4" rx="0.9" ry="0.7" fill="#f8d8a0"/><ellipse cx="43.3" cy="3.2" rx="1.0" ry="0.7" fill="#2a1810"/><ellipse cx="3.6" cy="2.3" rx="1.2" ry="0.8" fill="#f8d8a0"/><ellipse cx="21.2" cy="18.9" rx="1.2" ry="1.1" fill="#8a5a3a"/><ellipse cx="18.0" cy="20.1" rx="1.2" ry="1.1" fill="#5a3a2a"/><ellipse cx="30.6" cy="11.4" rx="0.9" ry="0.7" fill="#5a3a2a"/><ellipse cx="3.5" cy="13.0" rx="1.2" ry="0.9" fill="#1a1210"/><ellipse cx="31.2" cy="19.2" rx="0.6" ry="0.4" fill="#5a3a2a"/><ellipse cx="21.0" cy="11.5" rx="0.5" ry="0.4" fill="#5a3a2a"/><ellipse cx="7.3" cy="21.8" rx="1.3" ry="1.0" fill="#1a1210"/><ellipse cx="6.8" cy="20.5" rx="1.1" ry="1.1" fill="#5a3a2a"/><ellipse cx="23.5" cy="21.6" rx="1.3" ry="0.8" fill="#1a1210"/><ellipse cx="14.1" cy="21.2" rx="0.7" ry="0.6" fill="#1a1210"/><ellipse cx="46.0" cy="35.5" rx="0.9" ry="0.6" fill="#4a3020"/><ellipse cx="8.4" cy="32.2" rx="1.4" ry="1.0" fill="#4a3020"/><ellipse cx="1.3" cy="30.8" rx="0.7" ry="0.7" fill="#4a3020"/><ellipse cx="31.3" cy="25.3" rx="1.0" ry="0.9" fill="#4a3020"/><ellipse cx="35.4" cy="25.2" rx="0.9" ry="0.7" fill="#8a6a48"/><ellipse cx="23.8" cy="27.5" rx="1.1" ry="1.1" fill="#8a6a48"/><ellipse cx="46.2" cy="25.4" rx="0.5" ry="0.5" fill="#8a6a48"/><ellipse cx="52.9" cy="30.8" rx="1.2" ry="1.1" fill="#8a6a48"/><ellipse cx="37.4" cy="33.8" rx="1.2" ry="1.1" fill="#8a6a48"/><ellipse cx="14.2" cy="30.0" rx="0.8" ry="0.5" fill="#8a6a48"/></g></g></svg>
<svg style="left:288px;top:146px" width="58" height="38" viewBox="0 0 58 38"><defs><clipPath id="c288146"><rect width="58" height="38"/></clipPath></defs><g clip-path="url(#c288146)"><g filter="url(#bl)"><rect x="-6" y="-6" width="70" height="50" fill="#4a4448"/><rect x="-6" y="-6" width="12" height="50" fill="#2a2a30"/><rect x="5" y="-6" width="18" height="26" fill="#6e7686"/><rect x="11" y="-6" width="10" height="20" fill="#8890a2"/><rect x="8" y="6" width="8" height="2.5" fill="#3a3e4a"/><rect x="22" y="-6" width="9" height="22" fill="#b4aca6"/><ellipse cx="40" cy="6" rx="13" ry="12" fill="#e6b48c"/><ellipse cx="36" cy="3" rx="7" ry="7" fill="#fff4e6"/><rect x="26" y="8" width="3" height="10" fill="#6a5a50"/><rect x="44" y="4" width="7" height="16" fill="#c49c8a"/><rect x="50" y="-6" width="14" height="50" fill="#3a2f30"/><path d="M50 16 L58 6 L58 9 L50 19 Z" fill="#8a6a60"/><rect x="-6" y="18" width="60" height="13" fill="#3a2c28"/><ellipse cx="38" cy="21" rx="9" ry="4" fill="#b07c58"/><ellipse cx="20" cy="21" rx="5" ry="3" fill="#8a6a58"/><rect x="28" y="20" width="3" height="12" fill="#2a1e1a"/><rect x="34" y="21" width="3" height="12" fill="#2a1e1a"/><rect x="41" y="20" width="3" height="12" fill="#2a1e1a"/><rect x="-6" y="30" width="70" height="14" fill="#3b2b25"/><ellipse cx="30" cy="33" rx="14" ry="3" fill="#7a543c"/><ellipse cx="49" cy="27" rx="2" ry="2" fill="#a8b8d0"/></g><g filter="url(#bl2)"><ellipse cx="11.2" cy="2.7" rx="1.1" ry="1.1" fill="#4a5060"/><ellipse cx="6.8" cy="10.5" rx="1.3" ry="0.8" fill="#4a5060"/><ellipse cx="13.2" cy="1.3" rx="0.6" ry="0.4" fill="#9aa2b2"/><ellipse cx="15.7" cy="17.1" rx="1.1" ry="1.1" fill="#3a3e48"/><ellipse cx="16.0" cy="7.1" rx="1.4" ry="1.2" fill="#4a5060"/><ellipse cx="7.5" cy="7.5" rx="1.0" ry="0.7" fill="#3a3e48"/><ellipse cx="20.5" cy="3.3" rx="1.0" ry="0.7" fill="#3a3e48"/><ellipse cx="6.9" cy="12.8" rx="1.0" ry="0.7" fill="#3a3e48"/><ellipse cx="17.9" cy="7.7" rx="0.8" ry="0.8" fill="#3a3e48"/><ellipse cx="11.9" cy="4.5" rx="0.7" ry="0.4" fill="#4a5060"/><ellipse cx="16.0" cy="31.5" rx="0.7" ry="0.5" fill="#1e1614"/><ellipse cx="16.9" cy="32.0" rx="0.8" ry="0.7" fill="#1e1614"/><ellipse cx="25.9" cy="24.9" rx="0.8" ry="0.5" fill="#5a4038"/><ellipse cx="16.3" cy="18.3" rx="0.9" ry="0.7" fill="#5a4038"/><ellipse cx="46.1" cy="28.2" rx="1.3" ry="1.4" fill="#1e1614"/><ellipse cx="8.8" cy="26.7" rx="1.0" ry="0.8" fill="#1e1614"/><ellipse cx="36.4" cy="25.0" rx="1.2" ry="1.1" fill="#2a1e1a"/><ellipse cx="12.3" cy="18.9" rx="1.5" ry="1.5" fill="#5a4038"/><ellipse cx="12.5" cy="30.0" rx="1.1" ry="0.8" fill="#5a4038"/><ellipse cx="21.7" cy="30.3" rx="0.7" ry="0.6" fill="#1e1614"/><ellipse cx="19.8" cy="23.0" rx="1.2" ry="1.1" fill="#5a4038"/><ellipse cx="14.7" cy="20.1" rx="1.1" ry="1.1" fill="#1e1614"/><ellipse cx="43.7" cy="30.8" rx="1.1" ry="0.8" fill="#c89068"/><ellipse cx="6.5" cy="22.8" rx="0.9" ry="0.6" fill="#5a4038"/></g></g></svg>
<svg style="left:361.5px;top:146px" width="58" height="38" viewBox="0 0 58 38"><defs><clipPath id="c361146"><rect width="58" height="38"/></clipPath></defs><g clip-path="url(#c361146)"><g filter="url(#bl)"><rect x="-6" y="-6" width="70" height="50" fill="#2a3a72"/><rect x="-6" y="-6" width="70" height="11" fill="#4a62a4"/><ellipse cx="10" cy="2" rx="9" ry="1.6" fill="#93a0c8"/><ellipse cx="42" cy="2.5" rx="10" ry="1.6" fill="#93a0c8"/><rect x="-6" y="5" width="70" height="8" fill="#26325e"/><path d="M-2 23 L14 18 L30 14 L40 12 L42 14 L32 19 L16 26 L-2 31 Z" fill="#7a5a40"/><path d="M8 22 L22 17 L32 14 L33 15.5 L24 19 L10 24.5 Z" fill="#e0a648"/><path d="M-2 27 L6 24.5 L7 26.5 L-2 29 Z" fill="#c88c38"/><path d="M10 44 L18 30 L30 20 L36 15 L39 17 L35 26 L33 44 Z" fill="#3c5c9c"/><path d="M20 38 L33 36 L33 33 L24 34 Z" fill="#7f90c0"/><path d="M43.5 15 L46 16 L49 25 L52 44 L47 44 L47.5 30 Z" fill="#eaa02a"/><path d="M39 15 L43 16 L45 25 L41 24 Z" fill="#8a6a48"/><path d="M-6 31 L12 28 L8 44 L-6 44 Z" fill="#1c2548"/><rect x="53" y="12" width="11" height="32" fill="#27305a"/><ellipse cx="56" cy="32" rx="1.4" ry="3" fill="#b87c30"/></g><g filter="url(#bl2)"><ellipse cx="20.4" cy="18.7" rx="0.5" ry="0.4" fill="#f0b850"/><ellipse cx="20.4" cy="22.9" rx="0.6" ry="0.6" fill="#26305a"/><ellipse cx="32.0" cy="15.0" rx="1.0" ry="0.7" fill="#3a3a68"/><ellipse cx="10.5" cy="14.0" rx="0.7" ry="0.4" fill="#26305a"/><ellipse cx="30.3" cy="26.2" rx="0.9" ry="0.7" fill="#c88830"/><ellipse cx="9.9" cy="26.3" rx="0.9" ry="1.0" fill="#c88830"/><ellipse cx="17.4" cy="18.1" rx="0.4" ry="0.4" fill="#f0b850"/><ellipse cx="2.4" cy="18.8" rx="0.7" ry="0.5" fill="#f0b850"/><ellipse cx="32.4" cy="27.3" rx="1.0" ry="0.6" fill="#f0b850"/><ellipse cx="25.5" cy="28.1" rx="0.5" ry="0.5" fill="#f0b850"/><ellipse cx="5.9" cy="28.5" rx="0.7" ry="0.6" fill="#26305a"/><ellipse cx="40.5" cy="19.6" rx="0.6" ry="0.6" fill="#f0b850"/><ellipse cx="6.4" cy="28.9" rx="0.8" ry="0.5" fill="#f0b850"/><ellipse cx="24.4" cy="22.9" rx="0.5" ry="0.5" fill="#c88830"/><ellipse cx="25.3" cy="12.6" rx="0.9" ry="1.0" fill="#3a3a68"/><ellipse cx="10.4" cy="23.0" rx="0.4" ry="0.4" fill="#c88830"/><ellipse cx="23.0" cy="22.2" rx="0.8" ry="0.5" fill="#c88830"/><ellipse cx="38.8" cy="18.6" rx="0.5" ry="0.6" fill="#ffd070"/><ellipse cx="25.3" cy="12.3" rx="0.9" ry="0.5" fill="#c88830"/><ellipse cx="4.9" cy="16.0" rx="0.6" ry="0.4" fill="#f0b850"/><ellipse cx="12.5" cy="21.3" rx="0.4" ry="0.4" fill="#3a3a68"/><ellipse cx="35.5" cy="21.0" rx="0.8" ry="0.7" fill="#ffd070"/><ellipse cx="2.9" cy="23.7" rx="0.5" ry="0.4" fill="#3a3a68"/><ellipse cx="42.1" cy="22.1" rx="0.5" ry="0.3" fill="#c88830"/><ellipse cx="37.1" cy="16.7" rx="0.4" ry="0.3" fill="#ffd070"/><ellipse cx="7.2" cy="14.2" rx="0.5" ry="0.3" fill="#f0b850"/><ellipse cx="9.2" cy="19.0" rx="0.8" ry="0.6" fill="#c88830"/><ellipse cx="21.2" cy="17.0" rx="1.0" ry="0.7" fill="#26305a"/><ellipse cx="5.2" cy="19.6" rx="0.5" ry="0.5" fill="#26305a"/><ellipse cx="16.9" cy="28.0" rx="0.5" ry="0.5" fill="#c88830"/><ellipse cx="50.3" cy="24.3" rx="0.7" ry="0.6" fill="#f8b030"/><ellipse cx="48.8" cy="20.7" rx="0.9" ry="0.8" fill="#f8b030"/><ellipse cx="45.9" cy="20.0" rx="1.0" ry="0.6" fill="#26305a"/><ellipse cx="55.5" cy="28.5" rx="0.6" ry="0.6" fill="#26305a"/><ellipse cx="44.7" cy="18.2" rx="0.6" ry="0.4" fill="#26305a"/><ellipse cx="53.8" cy="37.6" rx="1.0" ry="0.8" fill="#d89030"/><ellipse cx="50.5" cy="19.7" rx="0.5" ry="0.4" fill="#26305a"/><ellipse cx="53.9" cy="19.8" rx="0.8" ry="0.7" fill="#26305a"/><ellipse cx="41.2" cy="28.0" rx="0.9" ry="0.9" fill="#f8b030"/><ellipse cx="57.5" cy="19.7" rx="0.4" ry="0.4" fill="#26305a"/><ellipse cx="51.8" cy="26.8" rx="0.9" ry="0.7" fill="#f8b030"/><ellipse cx="57.0" cy="35.9" rx="0.5" ry="0.4" fill="#f8b030"/><ellipse cx="26.2" cy="8.9" rx="1.3" ry="1.1" fill="#3a4a80"/><ellipse cx="49.6" cy="6.3" rx="1.2" ry="1.1" fill="#3a4a80"/><ellipse cx="46.0" cy="5.7" rx="0.8" ry="0.7" fill="#1e2850"/><ellipse cx="51.6" cy="9.4" rx="1.0" ry="1.1" fill="#3a4a80"/><ellipse cx="37.9" cy="9.3" rx="0.6" ry="0.7" fill="#1e2850"/><ellipse cx="3.7" cy="5.2" rx="1.3" ry="1.3" fill="#1e2850"/><ellipse cx="18.9" cy="9.1" rx="0.7" ry="0.6" fill="#1e2850"/><ellipse cx="29.0" cy="9.6" rx="0.9" ry="0.7" fill="#3a4a80"/><ellipse cx="32.0" cy="11.5" rx="0.6" ry="0.4" fill="#3a4a80"/><ellipse cx="13.3" cy="7.0" rx="0.6" ry="0.5" fill="#1e2850"/></g></g></svg>
<svg style="left:436px;top:146px" width="58" height="38" viewBox="0 0 58 38"><defs><clipPath id="c436146"><rect width="58" height="38"/></clipPath></defs><g clip-path="url(#c436146)"><g filter="url(#bl)"><rect x="-6" y="-6" width="70" height="50" fill="#3a251b"/><rect x="-6" y="-6" width="18" height="26" fill="#a4622a"/><ellipse cx="4" cy="5" rx="3" ry="4" fill="#d8a050"/><rect x="9" y="-6" width="6" height="18" fill="#3a2418"/><rect x="15" y="-6" width="8" height="16" fill="#7a4a20"/><ellipse cx="13" cy="6" rx="2" ry="2.5" fill="#c8a040"/><rect x="23" y="-6" width="10" height="14" fill="#4a2c1c"/><rect x="33" y="-6" width="16" height="12" fill="#7a4a28"/><rect x="49" y="-6" width="15" height="12" fill="#b8a088"/><ellipse cx="55" cy="3" rx="5" ry="3" fill="#f0e4d0"/><rect x="-6" y="10" width="40" height="12" fill="#2a1c18"/><ellipse cx="41" cy="10.5" rx="7" ry="2" fill="#f4ece4"/><rect x="34" y="12" width="22" height="13" rx="4" fill="#181210"/><ellipse cx="56" cy="18" rx="3" ry="2" fill="#d8c0a0"/><ellipse cx="47" cy="24" rx="3" ry="2.4" fill="#8a6a5a"/><rect x="-6" y="24" width="70" height="20" fill="#78522a"/><ellipse cx="50" cy="33" rx="12" ry="5" fill="#7a5a3a"/><ellipse cx="1" cy="24" rx="2.4" ry="4" fill="#f08a24"/><ellipse cx="8" cy="31" rx="8" ry="5" fill="#5a3a20"/><path d="M12 38 L16 24 L20 20 L22 38 Z" fill="#241814"/><ellipse cx="29" cy="15" rx="3.6" ry="4.2" fill="#3a2c2c"/><ellipse cx="29" cy="12" rx="3" ry="2" fill="#8a6a5a"/><path d="M17 44 L20 27 C22 21 36 21 38 27 L41 44 Z" fill="#5e443c"/><ellipse cx="29" cy="29" rx="5" ry="5" fill="#4a3430"/></g><g filter="url(#bl2)"><ellipse cx="13.7" cy="1.0" rx="0.9" ry="0.6" fill="#f8d8a0"/><ellipse cx="1.1" cy="5.5" rx="0.8" ry="0.5" fill="#e8a040"/><ellipse cx="31.1" cy="2.8" rx="0.7" ry="0.5" fill="#e8a040"/><ellipse cx="54.7" cy="0.3" rx="1.1" ry="1.1" fill="#2a1810"/><ellipse cx="11.2" cy="3.1" rx="1.1" ry="0.7" fill="#2a1810"/><ellipse cx="35.1" cy="6.7" rx="1.0" ry="0.7" fill="#f8d8a0"/><ellipse cx="16.2" cy="9.4" rx="1.2" ry="0.7" fill="#2a1810"/><ellipse cx="16.9" cy="7.0" rx="0.8" ry="0.6" fill="#f8d8a0"/><ellipse cx="34.7" cy="4.3" rx="0.6" ry="0.5" fill="#2a1810"/><ellipse cx="46.2" cy="0.8" rx="0.9" ry="0.8" fill="#2a1810"/><ellipse cx="37.6" cy="7.0" rx="0.6" ry="0.4" fill="#f8d8a0"/><ellipse cx="53.0" cy="6.4" rx="0.9" ry="0.7" fill="#f8d8a0"/><ellipse cx="43.3" cy="3.2" rx="1.0" ry="0.7" fill="#2a1810"/><ellipse cx="3.6" cy="2.3" rx="1.2" ry="0.8" fill="#f8d8a0"/><ellipse cx="21.2" cy="18.9" rx="1.2" ry="1.1" fill="#8a5a3a"/><ellipse cx="18.0" cy="20.1" rx="1.2" ry="1.1" fill="#5a3a2a"/><ellipse cx="30.6" cy="11.4" rx="0.9" ry="0.7" fill="#5a3a2a"/><ellipse cx="3.5" cy="13.0" rx="1.2" ry="0.9" fill="#1a1210"/><ellipse cx="31.2" cy="19.2" rx="0.6" ry="0.4" fill="#5a3a2a"/><ellipse cx="21.0" cy="11.5" rx="0.5" ry="0.4" fill="#5a3a2a"/><ellipse cx="7.3" cy="21.8" rx="1.3" ry="1.0" fill="#1a1210"/><ellipse cx="6.8" cy="20.5" rx="1.1" ry="1.1" fill="#5a3a2a"/><ellipse cx="23.5" cy="21.6" rx="1.3" ry="0.8" fill="#1a1210"/><ellipse cx="14.1" cy="21.2" rx="0.7" ry="0.6" fill="#1a1210"/><ellipse cx="46.0" cy="35.5" rx="0.9" ry="0.6" fill="#4a3020"/><ellipse cx="8.4" cy="32.2" rx="1.4" ry="1.0" fill="#4a3020"/><ellipse cx="1.3" cy="30.8" rx="0.7" ry="0.7" fill="#4a3020"/><ellipse cx="31.3" cy="25.3" rx="1.0" ry="0.9" fill="#4a3020"/><ellipse cx="35.4" cy="25.2" rx="0.9" ry="0.7" fill="#8a6a48"/><ellipse cx="23.8" cy="27.5" rx="1.1" ry="1.1" fill="#8a6a48"/><ellipse cx="46.2" cy="25.4" rx="0.5" ry="0.5" fill="#8a6a48"/><ellipse cx="52.9" cy="30.8" rx="1.2" ry="1.1" fill="#8a6a48"/><ellipse cx="37.4" cy="33.8" rx="1.2" ry="1.1" fill="#8a6a48"/><ellipse cx="14.2" cy="30.0" rx="0.8" ry="0.5" fill="#8a6a48"/></g></g></svg>
<svg style="left:510.5px;top:146px" width="58" height="38" viewBox="0 0 58 38"><defs><clipPath id="c510146"><rect width="58" height="38"/></clipPath></defs><g clip-path="url(#c510146)"><g filter="url(#bl)"><rect x="-6" y="-6" width="70" height="50" fill="#2d2f5c"/><rect x="-6" y="-6" width="70" height="14" fill="#35305f"/><ellipse cx="32" cy="9" rx="16" ry="5" fill="#6a6cab"/><ellipse cx="46" cy="5" rx="8" ry="3" fill="#4a4684"/><path d="M-6 2 L6 8 L16 16 L24 22 L30 44 L-6 44 Z" fill="#25284a"/><path d="M4 10 L12 16 L8 20 Z" fill="#6a70a0"/><path d="M64 8 L48 14 L38 20 L30 24 L30 44 L64 44 Z" fill="#2a3464"/><path d="M40 18 L52 13 L54 17 L44 22 Z" fill="#6878b0"/><ellipse cx="31" cy="20" rx="6" ry="3" fill="#8e9cd2"/><ellipse cx="25" cy="16.5" rx="2.8" ry="2.4" fill="#c0cae8"/><path d="M20 27 L40 25 L46 44 L14 44 Z" fill="#4c4c8c"/><ellipse cx="46" cy="31" rx="10" ry="5" fill="#5c6ca4"/><ellipse cx="8" cy="32" rx="8" ry="9" fill="#1c203c"/><ellipse cx="26" cy="33" rx="3" ry="6" fill="#1e2444"/></g><g filter="url(#bl2)"><ellipse cx="27.5" cy="27.7" rx="1.4" ry="1.1" fill="#3a4278"/><ellipse cx="57.8" cy="22.5" rx="1.4" ry="1.3" fill="#8a98c8"/><ellipse cx="34.9" cy="24.7" rx="1.4" ry="1.5" fill="#3a4278"/><ellipse cx="21.3" cy="18.2" rx="0.9" ry="0.9" fill="#242850"/><ellipse cx="4.3" cy="28.6" rx="1.0" ry="1.0" fill="#8a98c8"/><ellipse cx="5.1" cy="35.6" rx="1.6" ry="1.1" fill="#242850"/><ellipse cx="57.4" cy="20.7" rx="1.1" ry="1.2" fill="#8a98c8"/><ellipse cx="31.3" cy="34.5" rx="1.3" ry="1.1" fill="#1c2040"/><ellipse cx="29.4" cy="10.5" rx="1.3" ry="1.1" fill="#242850"/><ellipse cx="35.3" cy="24.2" rx="1.4" ry="1.5" fill="#1c2040"/><ellipse cx="56.6" cy="27.9" rx="1.0" ry="1.1" fill="#6a78b0"/><ellipse cx="22.4" cy="17.3" rx="0.9" ry="0.7" fill="#6a78b0"/><ellipse cx="29.7" cy="32.3" rx="1.2" ry="0.9" fill="#1c2040"/><ellipse cx="49.8" cy="9.0" rx="0.6" ry="0.4" fill="#8a98c8"/><ellipse cx="11.9" cy="26.2" rx="1.5" ry="1.0" fill="#3a4278"/><ellipse cx="40.4" cy="9.1" rx="0.9" ry="0.8" fill="#6a78b0"/><ellipse cx="42.1" cy="23.4" rx="1.0" ry="0.8" fill="#6a78b0"/><ellipse cx="27.6" cy="36.8" rx="1.2" ry="1.0" fill="#3a4278"/><ellipse cx="31.8" cy="13.5" rx="1.5" ry="1.6" fill="#3a4278"/><ellipse cx="0.4" cy="16.0" rx="1.5" ry="1.1" fill="#6a78b0"/><ellipse cx="46.1" cy="23.0" rx="0.9" ry="1.0" fill="#1c2040"/><ellipse cx="57.9" cy="23.1" rx="0.6" ry="0.7" fill="#6a78b0"/><ellipse cx="38.8" cy="16.4" rx="0.7" ry="0.6" fill="#242850"/><ellipse cx="28.4" cy="18.6" rx="1.4" ry="1.5" fill="#8a98c8"/><ellipse cx="9.4" cy="16.7" rx="1.6" ry="1.3" fill="#6a78b0"/><ellipse cx="50.0" cy="27.2" rx="1.1" ry="1.1" fill="#3a4278"/></g></g></svg>
<svg style="left:139px;top:212px" width="58" height="38" viewBox="0 0 58 38"><defs><clipPath id="c139212"><rect width="58" height="38"/></clipPath></defs><g clip-path="url(#c139212)"><g filter="url(#bl)"><rect x="-6" y="-6" width="70" height="50" fill="#eef2f8"/><rect x="-6" y="-6" width="70" height="13" fill="#1765cf"/><rect x="-6" y="6" width="70" height="4" fill="#2672d8"/><rect x="-6" y="9" width="70" height="3" fill="#3a84e0"/><rect x="-6" y="12" width="70" height="3" fill="#5a9ce8"/><rect x="-6" y="14.5" width="70" height="2.5" fill="#86b8ee"/><rect x="-6" y="16.5" width="70" height="2" fill="#b8d4f4"/><rect x="-6" y="30" width="70" height="14" fill="#dde4ee"/></g><g filter="url(#bl2)"></g></g></svg>
<svg style="left:213.5px;top:212px" width="58" height="38" viewBox="0 0 58 38"><defs><clipPath id="c213212"><rect width="58" height="38"/></clipPath></defs><g clip-path="url(#c213212)"><g filter="url(#bl)"><rect x="-6" y="-6" width="70" height="50" fill="#4f7a2a"/><rect x="-6" y="-6" width="70" height="20" fill="#6f6aa6"/><rect x="-6" y="-6" width="70" height="11" fill="#5a5a9c"/><ellipse cx="40" cy="5" rx="12" ry="2.5" fill="#b890b8"/><ellipse cx="14" cy="8" rx="10" ry="2" fill="#8a7ab0"/><ellipse cx="30" cy="13" rx="22" ry="3" fill="#bca4c4"/><path d="M-6 20 L14 17 L26 14 L32 12.5 L36 11.5 L48 11.5 L50 12.5 L64 13 L64 24 L-6 24 Z" fill="#6a5668"/><path d="M-6 20 L20 19 L40 18 L64 18 L64 25 L-6 25 Z" fill="#34502a"/><rect x="-6" y="24" width="70" height="5" fill="#8c9c3c"/><rect x="-6" y="28" width="70" height="16" fill="#3f6a24"/><ellipse cx="40" cy="34" rx="16" ry="2" fill="#4f7c2c"/></g><g filter="url(#bl2)"><ellipse cx="15.0" cy="8.2" rx="1.1" ry="1.0" fill="#8a7ab8"/><ellipse cx="38.6" cy="10.4" rx="1.1" ry="0.7" fill="#8a7ab8"/><ellipse cx="30.8" cy="2.6" rx="0.8" ry="0.5" fill="#c8a0c0"/><ellipse cx="39.7" cy="12.0" rx="1.4" ry="0.9" fill="#8a7ab8"/><ellipse cx="46.1" cy="10.7" rx="0.7" ry="0.7" fill="#c8a0c0"/><ellipse cx="55.1" cy="9.5" rx="0.7" ry="0.6" fill="#8a7ab8"/><ellipse cx="43.8" cy="6.8" rx="0.9" ry="0.9" fill="#c8a0c0"/><ellipse cx="37.0" cy="7.9" rx="0.8" ry="0.8" fill="#4a4a94"/><ellipse cx="57.2" cy="8.3" rx="1.0" ry="1.1" fill="#4a4a94"/><ellipse cx="25.5" cy="8.7" rx="1.0" ry="0.7" fill="#c8a0c0"/><ellipse cx="6.2" cy="35.3" rx="1.6" ry="1.2" fill="#2f5a1c"/><ellipse cx="14.8" cy="35.6" rx="1.6" ry="1.3" fill="#4f7c2c"/><ellipse cx="50.6" cy="32.5" rx="1.9" ry="1.3" fill="#4f7c2c"/><ellipse cx="52.3" cy="32.2" rx="1.1" ry="1.0" fill="#3a6420"/><ellipse cx="8.7" cy="34.0" rx="1.6" ry="1.0" fill="#2f5a1c"/><ellipse cx="4.1" cy="34.4" rx="0.8" ry="0.6" fill="#4f7c2c"/><ellipse cx="56.7" cy="32.6" rx="2.0" ry="2.1" fill="#4f7c2c"/><ellipse cx="5.5" cy="34.8" rx="1.9" ry="1.7" fill="#3a6420"/><ellipse cx="36.8" cy="30.6" rx="0.9" ry="0.8" fill="#4f7c2c"/><ellipse cx="11.2" cy="33.1" rx="1.1" ry="0.9" fill="#4f7c2c"/><ellipse cx="5.9" cy="36.4" rx="0.9" ry="0.6" fill="#4f7c2c"/><ellipse cx="9.4" cy="32.7" rx="1.6" ry="1.0" fill="#3a6420"/></g></g></svg>
<svg style="left:288px;top:212px" width="58" height="38" viewBox="0 0 58 38"><defs><clipPath id="c288212"><rect width="58" height="38"/></clipPath></defs><g clip-path="url(#c288212)"><g filter="url(#bl)"><rect x="-6" y="-6" width="70" height="50" fill="#5a7a3a"/><rect x="9" y="-6" width="55" height="17" fill="#5a9ae0"/><ellipse cx="20" cy="4" rx="6" ry="3" fill="#eef4fa"/><ellipse cx="27" cy="9" rx="5" ry="2" fill="#dce8f4"/><path d="M9 14 L18 11 L26 10 L34 12 L34 24 L9 24 Z" fill="#468a2a"/><path d="M18 16 L28 13 L34 15 L34 24 L18 24 Z" fill="#357423"/><rect x="9" y="22" width="40" height="22" fill="#a48c76"/><ellipse cx="24" cy="33" rx="7" ry="4" fill="#8c9cb4"/><ellipse cx="16" cy="27" rx="4" ry="3" fill="#c4ae98"/><rect x="-6" y="-6" width="11" height="50" fill="#38391f"/><rect x="4" y="-6" width="6" height="50" fill="#8c9cb4"/><rect x="5.5" y="2" width="2.5" height="36" fill="#cdd8e4"/><rect x="9" y="8" width="3.5" height="36" fill="#2a471a"/><path d="M-6 -6 L14 -6 L12 2 L-6 5 Z" fill="#38332a"/></g><g filter="url(#bl2)"><ellipse cx="33.2" cy="10.2" rx="1.2" ry="1.2" fill="#2f6a1c"/><ellipse cx="17.3" cy="10.8" rx="1.2" ry="1.3" fill="#2f6a1c"/><ellipse cx="34.0" cy="13.4" rx="0.8" ry="0.6" fill="#3a7a24"/><ellipse cx="20.6" cy="14.8" rx="1.3" ry="1.4" fill="#2f6a1c"/><ellipse cx="29.5" cy="13.1" rx="1.3" ry="1.1" fill="#3a7a24"/><ellipse cx="24.7" cy="21.8" rx="0.9" ry="0.8" fill="#5a9a34"/><ellipse cx="19.9" cy="18.0" rx="1.3" ry="1.1" fill="#3a7a24"/><ellipse cx="29.1" cy="21.3" rx="0.6" ry="0.4" fill="#2f6a1c"/><ellipse cx="23.7" cy="18.6" rx="1.2" ry="0.7" fill="#3a7a24"/><ellipse cx="23.7" cy="12.1" rx="1.3" ry="1.0" fill="#2f6a1c"/><ellipse cx="13.6" cy="20.2" rx="1.3" ry="1.1" fill="#5a9a34"/><ellipse cx="23.0" cy="12.5" rx="1.4" ry="0.9" fill="#5a9a34"/><ellipse cx="18.8" cy="12.3" rx="1.1" ry="1.1" fill="#5a9a34"/><ellipse cx="19.4" cy="16.2" rx="0.6" ry="0.5" fill="#5a9a34"/><ellipse cx="18.7" cy="30.7" rx="0.9" ry="0.5" fill="#7a6a58"/><ellipse cx="30.5" cy="34.0" rx="0.7" ry="0.4" fill="#c8b8a0"/><ellipse cx="17.2" cy="28.7" rx="0.6" ry="0.6" fill="#9aaac0"/><ellipse cx="10.5" cy="27.1" rx="1.0" ry="1.1" fill="#c8b8a0"/><ellipse cx="29.4" cy="33.3" rx="0.5" ry="0.5" fill="#7a6a58"/><ellipse cx="26.9" cy="37.8" rx="1.2" ry="0.9" fill="#7a6a58"/><ellipse cx="28.9" cy="28.9" rx="0.9" ry="0.6" fill="#9aaac0"/><ellipse cx="23.5" cy="32.1" rx="0.8" ry="0.8" fill="#c8b8a0"/><ellipse cx="29.0" cy="31.3" rx="0.7" ry="0.5" fill="#c8b8a0"/><ellipse cx="17.6" cy="30.4" rx="0.6" ry="0.6" fill="#7a6a58"/></g></g></svg>
<svg style="left:159.5px;top:227.5px" width="8" height="15" viewBox="0 0 8 15"><path d="M4 2.6 L4 6.4 M0.6 1.6 L4 3.4 L7.4 1.2 M4 6.4 L3 8.4 M4 6.4 L4.8 8.2" stroke="#1c2436" stroke-width="1.1" fill="none"/><circle cx="4" cy="1.8" r=".8" fill="#1c2436"/><ellipse cx="4.8" cy="13.4" rx="2" ry=".6" fill="#6f88b0"/></svg>
<span class="t" style="left:139.7px;top:187.7px;font-size:8.5px;color:#111;transform:scaleX(0.872);">autumn_1440x96</span>
<span class="t" style="left:158.8px;top:198.0px;font-size:8.5px;color:#111;transform:scaleX(0.838);">0.heic</span>
<span class="t" style="left:214.3px;top:187.7px;font-size:8.5px;color:#111;transform:scaleX(0.844);">cheers_1440x960</span>
<span class="t" style="left:234.3px;top:198.0px;font-size:8.5px;color:#111;transform:scaleX(0.947);">.heic</span>
<span class="t" style="left:288.8px;top:187.7px;font-size:8.5px;color:#111;transform:scaleX(0.850);">crowd_1440x960.</span>
<span class="t" style="left:309.8px;top:198.0px;font-size:8.5px;color:#111;transform:scaleX(0.962);">heic</span>
<span class="t" style="left:362.8px;top:187.7px;font-size:8.5px;color:#111;transform:scaleX(0.884);">old_bridge_1440</span>
<span class="t" style="left:374.8px;top:198.0px;font-size:8.5px;color:#111;transform:scaleX(0.880);">x960.heic</span>
<span class="t" style="left:436.8px;top:187.7px;font-size:8.5px;color:#111;transform:scaleX(0.887);">random_collectio</span>
<span class="t" style="left:436.8px;top:198.0px;font-size:8.5px;color:#111;transform:scaleX(0.880);">n_1440x960.heic</span>
<span class="t" style="left:511.3px;top:187.7px;font-size:8.5px;color:#111;transform:scaleX(0.907);">season_collectio</span>
<span class="t" style="left:511.3px;top:198.0px;font-size:8.5px;color:#111;transform:scaleX(0.880);">n_1440x960.heic</span>
<span class="t" style="left:139.8px;top:253.7px;font-size:8.5px;color:#111;transform:scaleX(0.862);">ski_jump_1440x9</span>
<span class="t" style="left:156.3px;top:264.0px;font-size:8.5px;color:#111;transform:scaleX(0.876);">60.heic</span>
<span class="t" style="left:213.8px;top:253.7px;font-size:8.5px;color:#111;transform:scaleX(0.858);">spring_1440x960.</span>
<span class="t" style="left:235.3px;top:264.0px;font-size:8.5px;color:#111;transform:scaleX(0.962);">heic</span>
<span class="t" style="left:289.8px;top:253.7px;font-size:8.5px;color:#111;transform:scaleX(0.869);">summer_1440x9</span>
<span class="t" style="left:305.3px;top:264.0px;font-size:8.5px;color:#111;transform:scaleX(0.876);">60.heic</span>
<span class="t" style="left:33.0px;top:450.5px;font-size:8px;color:#2a4a6a;transform:scaleX(0.945);">11 items</span>
<span class="t" style="left:76.0px;top:450.5px;font-size:8px;color:#2a4a6a;transform:scaleX(0.948);">1 item selected</span>
<span class="t" style="left:132.0px;top:450.5px;font-size:8px;color:#2a4a6a;transform:scaleX(0.876);">165 KB</span>
<svg style="left:553.5px;top:451px" width="9" height="8" viewBox="0 0 9 8"><rect x="0" y="0.0" width="2.2" height="1.8" fill="#d0d0d0"/><rect x="0" y="2.6" width="2.2" height="1.8" fill="#d0d0d0"/><rect x="0" y="5.2" width="2.2" height="1.8" fill="#d0d0d0"/><rect x="3" y="0.0" width="2.2" height="1.8" fill="#d0d0d0"/><rect x="3" y="2.6" width="2.2" height="1.8" fill="#d0d0d0"/><rect x="3" y="5.2" width="2.2" height="1.8" fill="#d0d0d0"/><rect x="6" y="0.0" width="2.2" height="1.8" fill="#d0d0d0"/><rect x="6" y="2.6" width="2.2" height="1.8" fill="#d0d0d0"/><rect x="6" y="5.2" width="2.2" height="1.8" fill="#d0d0d0"/></svg>
<div class="b" style="left:564.5px;top:448px;width:14.5px;height:14px;background:#b9e0f2;border:1px solid #8fcbe6;"></div>
<svg style="left:568.3px;top:452.3px" width="7.4" height="5.6" viewBox="0 0 7.4 5.6"><rect x="0" y="0" width="7.4" height="5.6" fill="#9acdea"/><path d="M0 2 L7.4 4 L7.4 5.6 L0 5.6 Z" fill="#1e3a4c"/></svg>
<div class="b" style="left:317px;top:199px;width:230px;height:310px;background:#f0f0f0;border:1px solid #8f96d2;box-shadow:0 2px 7px rgba(0,0,0,.32);"></div>
<div class="b" style="left:318px;top:200px;width:228px;height:18px;background:#ffffff;"></div>
<svg style="left:323px;top:204px" width="7" height="9" viewBox="0 0 7 9"><path d="M0.5 0.5 H4.5 L6.5 2.5 V8.5 H0.5 Z" fill="#fff" stroke="#c4c4c4" stroke-width=".7"/></svg>
<span class="t" style="left:333.0px;top:204.0px;font-size:8px;color:#000;transform:scaleX(0.921);">surfer_1440x960.heic Properties</span>
<svg style="left:532.5px;top:204.5px" width="7" height="7" viewBox="0 0 7 7"><path d="M0.5 0.5 L6.5 6.5 M6.5 0.5 L0.5 6.5" stroke="#222" stroke-width="1" fill="none"/></svg>
<div class="b" style="left:321px;top:235px;width:222px;height:251px;background:#ffffff;border:1px solid #e8e8e8;"></div>
<div class="b" style="left:322px;top:224.5px;width:32px;height:10.5px;background:#f0f0f0;border:1px solid #e6e6e6;border-bottom:none;"></div>
<div class="b" style="left:353px;top:224.5px;width:33px;height:10.5px;background:#f0f0f0;border:1px solid #e6e6e6;border-bottom:none;"></div>
<div class="b" style="left:416px;top:224.5px;width:62px;height:10.5px;background:#f0f0f0;border:1px solid #e6e6e6;border-bottom:none;"></div>
<div class="b" style="left:385px;top:222.5px;width:32px;height:13.5px;background:#ffffff;border:1px solid #e6e6e6;border-bottom:none;"></div>
<span class="t" style="left:326.0px;top:224.5px;font-size:7px;color:#111;transform:scaleX(0.964);">General</span>
<span class="t" style="left:358.0px;top:224.5px;font-size:7px;color:#111;transform:scaleX(0.949);">Security</span>
<span class="t" style="left:390.0px;top:224.0px;font-size:7px;color:#111;transform:scaleX(1.028);">Details</span>
<span class="t" style="left:419.5px;top:224.5px;font-size:7px;color:#111;transform:scaleX(0.973);">Previous Versions</span>
<div class="b" style="left:330px;top:243px;width:204px;height:218.5px;background:#ffffff;border:1px solid #d4d7de;overflow:hidden;"></div>
<div class="b" style="left:522px;top:244px;width:11px;height:216.5px;background:#f0f0f0;"></div>
<div class="b" style="left:522.5px;top:254px;width:9.5px;height:61.5px;background:#cdcdcd;"></div>
<svg style="left:525px;top:247.5px" width="5" height="3" viewBox="0 0 5 3"><path d="M0.5 2.5 L2.5 0.5 L4.5 2.5" stroke="#505050" stroke-width=".9" fill="none"/></svg>
<svg style="left:525px;top:453.5px" width="5" height="3" viewBox="0 0 5 3"><path d="M0.5 0.5 L2.5 2.5 L4.5 0.5" stroke="#505050" stroke-width=".9" fill="none"/></svg>
<div class="b" style="left:511px;top:244px;width:1px;height:9px;background:#ececec;"></div>
<span class="t" style="left:333.0px;top:244.2px;font-size:7px;color:#111;transform:scaleX(0.945);">Property</span>
<span class="t" style="left:414.0px;top:244.2px;font-size:7px;color:#111;transform:scaleX(0.978);">Value</span>
<span class="t" style="left:335.0px;top:254.7px;font-size:8px;color:#3c63b4;transform:scaleX(0.950);">Description</span>
<div class="b" style="left:376px;top:260.0px;width:142px;height:1px;background:#e9e9e9;"></div>
<span class="t" style="left:333.0px;top:266.4px;font-size:7px;color:#111;transform:scaleX(0.939);">Rating</span>
<svg style="left:414.3px;top:267px" width="8" height="8" viewBox="0 0 8 8"><path d="M4 0.2 L5.1 2.9 L7.9 3.1 L5.8 5 L6.5 7.8 L4 6.3 L1.5 7.8 L2.2 5 L0.1 3.1 L2.9 2.9 Z" fill="#f8d456" stroke="#f2c232" stroke-width=".3"/></svg>
<svg style="left:425.2px;top:267px" width="8" height="8" viewBox="0 0 8 8"><path d="M4 0.2 L5.1 2.9 L7.9 3.1 L5.8 5 L6.5 7.8 L4 6.3 L1.5 7.8 L2.2 5 L0.1 3.1 L2.9 2.9 Z" fill="#f8d456" stroke="#f2c232" stroke-width=".3"/></svg>
<svg style="left:436.1px;top:267px" width="8" height="8" viewBox="0 0 8 8"><path d="M4 0.2 L5.1 2.9 L7.9 3.1 L5.8 5 L6.5 7.8 L4 6.3 L1.5 7.8 L2.2 5 L0.1 3.1 L2.9 2.9 Z" fill="#f8d456" stroke="#f2c232" stroke-width=".3"/></svg>
<svg style="left:447.0px;top:267px" width="8" height="8" viewBox="0 0 8 8"><path d="M4 0.2 L5.1 2.9 L7.9 3.1 L5.8 5 L6.5 7.8 L4 6.3 L1.5 7.8 L2.2 5 L0.1 3.1 L2.9 2.9 Z" fill="#f8d456" stroke="#f2c232" stroke-width=".3"/></svg>
<svg style="left:457.90000000000003px;top:267px" width="8" height="8" viewBox="0 0 8 8"><path d="M4 0.2 L5.1 2.9 L7.9 3.1 L5.8 5 L6.5 7.8 L4 6.3 L1.5 7.8 L2.2 5 L0.1 3.1 L2.9 2.9 Z" fill="#fcfcfc" stroke="#c8c8c8" stroke-width=".5"/></svg>
<span class="t" style="left:333.0px;top:276.8px;font-size:7px;color:#111;transform:scaleX(0.934);">Comments</span>
<span class="t" style="left:335.0px;top:288.6px;font-size:8px;color:#3c63b4;transform:scaleX(0.937);">Origin</span>
<div class="b" style="left:358px;top:293.90000000000003px;width:160px;height:1px;background:#e9e9e9;"></div>
<div class="b" style="left:331.5px;top:299.2px;width:179px;height:9.7px;background:#0a74d4;"></div>
<span class="t" style="left:333.0px;top:299.3px;font-size:7px;color:#ffffff;transform:scaleX(0.945);">Date taken</span>
<span class="t" style="left:414.0px;top:299.3px;font-size:7px;color:#ffffff;transform:scaleX(0.977);">5/2/2018 5:59 AM</span>
<span class="t" style="left:333.0px;top:310.1px;font-size:7px;color:#111;transform:scaleX(0.950);">Program name</span>
<span class="t" style="left:333.0px;top:319.8px;font-size:7px;color:#111;transform:scaleX(0.973);">Date acquired</span>
<span class="t" style="left:333.0px;top:330.4px;font-size:7px;color:#111;transform:scaleX(0.968);">Copyright</span>
<span class="t" style="left:335.0px;top:342.8px;font-size:8px;color:#3c63b4;transform:scaleX(0.918);">Image</span>
<div class="b" style="left:358.4px;top:348.1px;width:159.60000000000002px;height:1px;background:#e9e9e9;"></div>
<span class="t" style="left:333.0px;top:353.4px;font-size:7px;color:#111;transform:scaleX(0.916);">Image ID</span>
<span class="t" style="left:333.0px;top:364.0px;font-size:7px;color:#111;transform:scaleX(0.957);">Dimensions</span>
<span class="t" style="left:414.0px;top:364.0px;font-size:7px;color:#111;transform:scaleX(1.010);">1440 x 960</span>
<span class="t" style="left:333.0px;top:374.1px;font-size:7px;color:#111;transform:scaleX(0.950);">Width</span>
<span class="t" style="left:414.0px;top:374.1px;font-size:7px;color:#111;transform:scaleX(1.003);">1440 pixels</span>
<span class="t" style="left:333.0px;top:383.8px;font-size:7px;color:#111;transform:scaleX(0.959);">Height</span>
<span class="t" style="left:414.0px;top:383.8px;font-size:7px;color:#111;transform:scaleX(1.015);">960 pixels</span>
<span class="t" style="left:333.0px;top:393.9px;font-size:7px;color:#111;transform:scaleX(0.978);">Horizontal resolution</span>
<span class="t" style="left:414.0px;top:393.9px;font-size:7px;color:#111;transform:scaleX(0.944);">72 dpi</span>
<span class="t" style="left:333.0px;top:404.4px;font-size:7px;color:#111;transform:scaleX(0.977);">Vertical resolution</span>
<span class="t" style="left:414.0px;top:404.4px;font-size:7px;color:#111;transform:scaleX(0.944);">72 dpi</span>
<span class="t" style="left:333.0px;top:414.6px;font-size:7px;color:#111;transform:scaleX(0.963);">Bit depth</span>
<span class="t" style="left:414.0px;top:414.6px;font-size:7px;color:#111;transform:scaleX(0.963);">32</span>
<span class="t" style="left:333.0px;top:425.1px;font-size:7px;color:#111;transform:scaleX(0.970);">Compression</span>
<span class="t" style="left:333.0px;top:435.4px;font-size:7px;color:#111;transform:scaleX(0.980);">Resolution unit</span>
<span class="t" style="left:333.0px;top:444.8px;font-size:7px;color:#111;transform:scaleX(0.971);">Color representation</span>
<span class="t" style="left:333.0px;top:455.0px;font-size:7px;color:#111;transform:scaleX(0.973);">Compressed bits/pixel</span>
<div class="b" style="left:331px;top:460.5px;width:191px;height:1px;background:#d4d7de;"></div>
<div class="b" style="left:322px;top:461.5px;width:220px;height:8px;background:#ffffff;"></div>
<span class="t" style="left:330.0px;top:467.4px;font-size:7px;color:#0a63c8;transform:scaleX(0.978);text-decoration:underline;">Remove Properties and Personal Information</span>
<div class="b" style="left:392.5px;top:492.5px;width:46.5px;height:12px;background:#e3e3e3;border:1.2px solid #2a88dc;"></div>
<span class="t" style="left:410.5px;top:493.5px;font-size:7px;color:#111;transform:scaleX(0.939);">OK</span>
<div class="b" style="left:444.5px;top:492.5px;width:46.5px;height:12px;background:#e3e3e3;border:1px solid #b8b8b8;"></div>
<span class="t" style="left:457.0px;top:493.5px;font-size:7px;color:#111;transform:scaleX(0.964);">Cancel</span>
<div class="b" style="left:496px;top:492.5px;width:46.5px;height:12px;background:#e3e3e3;border:1px solid #b8b8b8;"></div>
<span class="t" style="left:510.5px;top:493.5px;font-size:7px;color:#111;transform:scaleX(0.999);">Apply</span>
</div></body></html>
